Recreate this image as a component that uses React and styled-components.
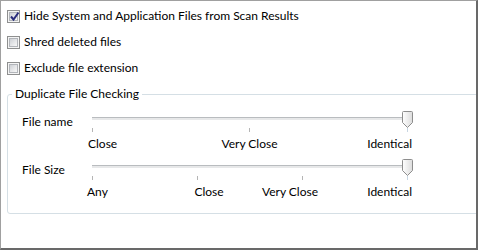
import styled, { createGlobalStyle } from "styled-components";

// Global
const GlobalStyle = createGlobalStyle`
  html, body {
    margin: 0;
    padding: 0;
    background: #ffffff;
  }
  body {
    font-family: "Segoe UI", Lato, "Open Sans", sans-serif;
    font-size: 12px;
    color: #000000;
  }
`;

// Data
const sliders = [
  {
    label: "File name",
    ticks: [0, 157, 315],
    marks: [
      { text: "Close", at: -4, align: "left" },
      { text: "Very Close", at: 157.5, align: "center" },
      { text: "Identical", at: 320, align: "right" },
    ],
  },
  {
    label: "File Size",
    ticks: [0, 105, 210, 315],
    marks: [
      { text: "Any", at: -5, align: "left" },
      { text: "Close", at: 117, align: "center" },
      { text: "Very Close", at: 198, align: "center" },
      { text: "Identical", at: 320, align: "right" },
    ],
  },
];

const options = [
  { text: "Hide System and Application Files from Scan Results", checked: true },
  { text: "Shred deleted files", checked: false },
  { text: "Exclude file extension", checked: false },
];

// Sub-components
const Frame = styled.div`
  box-sizing: border-box;
  width: 478px;
  height: 250px;
  overflow: hidden;
  border-top: 1px solid #a0a0a0;
  border-left: 1px solid #a0a0a0;
  border-right: 2px solid #696969;
  border-bottom: 2px solid #696969;
  padding: 2px 0 0 6px;
`;

const OptionRow = styled.label`
  display: flex;
  align-items: center;
  gap: 4px;
  height: 26px;
  line-height: 16px;
  white-space: nowrap;
`;

const Box = styled.span`
  position: relative;
  box-sizing: border-box;
  width: 13px;
  height: 13px;
  flex: none;
  border: 1px solid #8e8f8f;
  background: #f4f4f4;

  &::before {
    content: "";
    position: absolute;
    inset: 1px;
    border: 1px solid #b2b5ba;
    background: linear-gradient(135deg, #cdd0d5 0%, #e6e7e9 55%, #f7f7f7 100%);
  }

  svg {
    position: absolute;
    left: 1px;
    top: 0px;
  }
`;

const Group = styled.fieldset`
  box-sizing: border-box;
  width: 490px;
  margin: 5px 0 0 0;
  padding: 9px 0 6px 14px;
  border: 1px solid #d5dfe5;
  border-radius: 3px;
  min-width: 0;
`;

const Legend = styled.legend`
  margin-left: -10px;
  padding: 0 3px;
  line-height: 16px;
`;

const SliderRow = styled.div`
  display: grid;
  grid-template-columns: 70px 330px;
  height: 48px;
`;

const RowLabel = styled.span`
  line-height: 16px;
  padding-top: 3px;
`;

const SliderBody = styled.div`
  display: flex;
  flex-direction: column;
`;

const TrackArea = styled.div`
  position: relative;
  height: 17px;
  width: 321px;
`;

const Track = styled.div`
  position: absolute;
  left: 0;
  right: 0;
  top: 6px;
  height: 3px;
  box-sizing: border-box;
  border-top: 1px solid #b9bcbf;
  background: #e7e8e9;
`;

const Thumb = styled.svg`
  position: absolute;
  top: 0;
  right: 0;
`;

const Scale = styled.div`
  position: relative;
  height: 26px;
  width: 321px;
`;

const Tick = styled.span`
  position: absolute;
  top: 0;
  width: 1px;
  height: 4px;
  background: ${props => props.active ? "#c8d6e2" : "#b5b5b5"};
`;

const Mark = styled.span`
  position: absolute;
  top: 8px;
  line-height: 16px;
  white-space: nowrap;
  transform: ${props =>
    props.align === "center" ? "translateX(-50%)" :
    props.align === "right" ? "translateX(-100%)" : "none"};
`;

// Pieces
const CheckBox = ({ checked }) => (
  <Box>
    {checked &&
      <svg width="11" height="11" viewBox="0 0 11 11">
        <path d="M2 5.5 L4.5 8.5 L9.5 1.5" fill="none" stroke="#2a2d7c" strokeWidth="2" strokeLinejoin="miter" />
      </svg>}
  </Box>
);

const ThumbIcon = () => (
  <Thumb width="11" height="17" viewBox="0 0 11 17">
    <defs>
      <linearGradient id="thumbFill" x1="0" y1="0" x2="1" y2="0">
        <stop offset="0" stopColor="#ffffff" />
        <stop offset="1" stopColor="#dcdcdc" />
      </linearGradient>
    </defs>
    <path d="M1.5 0.5 H9.5 Q10.5 0.5 10.5 1.5 V11.5 L5.5 16.5 L0.5 11.5 V1.5 Q0.5 0.5 1.5 0.5 Z" fill="url(#thumbFill)" stroke="#8d8d8d" />
  </Thumb>
);

const Slider = ({ label, ticks, marks }) => (
  <SliderRow>
    <RowLabel>{label}</RowLabel>
    <SliderBody>
      <TrackArea>
        <Track />
        <ThumbIcon />
      </TrackArea>
      <Scale>
        {ticks.map((t, ind) => (
          <Tick key={String(ind)} active={ind === ticks.length - 1} style={{ left: t }} />
        ))}
        {marks.map((m) => (
          <Mark key={m.text} align={m.align} style={{ left: m.at }}>{m.text}</Mark>
        ))}
      </Scale>
    </SliderBody>
  </SliderRow>
);

// Main Component
const App = () => {
  return (
    <>
      <GlobalStyle />
      <Frame>
        {options.map((o) => (
          <OptionRow key={o.text}>
            <CheckBox checked={o.checked} />
            <span>{o.text}</span>
          </OptionRow>
        ))}
        <Group>
          <Legend>Duplicate File Checking</Legend>
          {sliders.map((s) => (
            <Slider key={s.label} {...s} />
          ))}
        </Group>
      </Frame>
    </>
  );
}

export default App;
